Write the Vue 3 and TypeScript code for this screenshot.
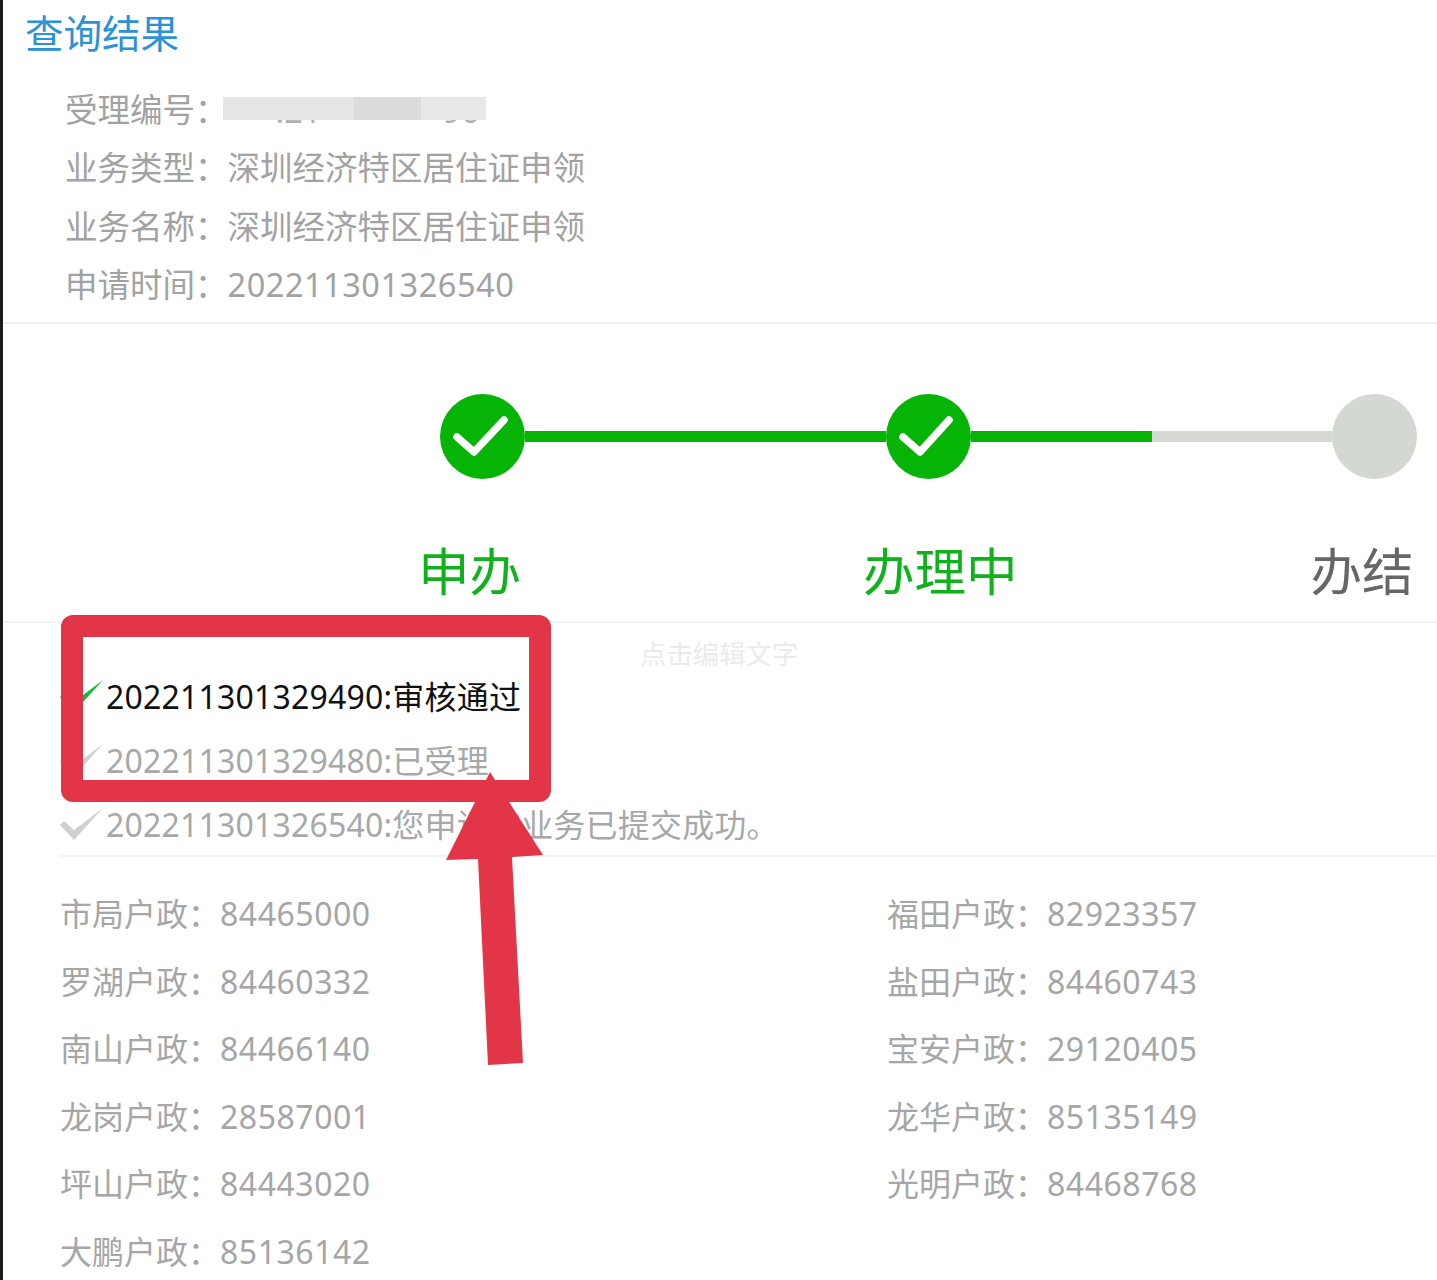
<script setup lang="ts">
const COLON = '\uFF1A'
const infoRows = [
  { label: '业务类型', value: '深圳经济特区居住证申领', digits: false },
  { label: '业务名称', value: '深圳经济特区居住证申领', digits: false },
  { label: '申请时间', value: '202211301326540', digits: true },
]
const logs = [
  { text: '202211301329490:审核通过', active: true },
  { text: '202211301329480:已受理', active: false },
  { text: '202211301326540:您申请的业务已提交成功。', active: false },
]
const contacts = [
  ['市局户政', '84465000'], ['福田户政', '82923357'],
  ['罗湖户政', '84460332'], ['盐田户政', '84460743'],
  ['南山户政', '84466140'], ['宝安户政', '29120405'],
  ['龙岗户政', '28587001'], ['龙华户政', '85135149'],
  ['坪山户政', '84443020'], ['光明户政', '84468768'],
  ['大鹏户政', '85136142'],
]
</script>

<template>
  <div class="page">
    <h1 class="title">查询结果</h1>

    <section class="info">
      <div class="info-row">
        <span>受理编号{{ COLON }}</span>
        <span class="masked">
          <span class="mask-digits mask-digits-a">.21</span>
          <span class="mask-digits mask-digits-b">96</span>
          <span class="mask mask-a"></span>
          <span class="mask mask-b"></span>
          <span class="mask mask-c"></span>
        </span>
      </div>
      <div v-for="r in infoRows" :key="r.label" class="info-row">
        <span>{{ r.label }}{{ COLON }}</span><span :class="{ digits: r.digits }">{{ r.value }}</span>
      </div>
    </section>

    <section class="steps">
      <div class="track">
        <span class="dot done">
          <svg viewBox="0 0 85 85" width="85" height="85"><path d="M17 43 L34 58 L64 26" fill="none" stroke="#fff" stroke-width="7.5" stroke-linecap="round" stroke-linejoin="round" /></svg>
        </span>
        <span class="seg seg-full"></span>
        <span class="dot done">
          <svg viewBox="0 0 85 85" width="85" height="85"><path d="M17 43 L34 58 L63 26" fill="none" stroke="#fff" stroke-width="7.5" stroke-linecap="round" stroke-linejoin="round" /></svg>
        </span>
        <span class="seg seg-half"></span>
        <span class="dot todo"></span>
      </div>
      <div class="step-labels">
        <span class="step-label green">申办</span>
        <span class="step-label green">办理中</span>
        <span class="step-label dark">办结</span>
      </div>
    </section>

    <section class="logs">
      <div class="hint">点击编辑文字</div>
      <div v-for="l in logs" :key="l.text" class="log" :class="{ active: l.active }">
        <svg class="tick" viewBox="0 0 46 36" width="46" height="36"><path d="M0 20 L4 16 L14 25 L43 3 L14 35 Z" :fill="l.active ? '#12b93a' : '#cfd1d1'" /></svg>
        <span>{{ l.text }}</span>
      </div>
    </section>

    <section class="contacts">
      <div v-for="c in contacts" :key="c[0]" class="contact">{{ c[0] }}{{ COLON }}<span class="digits">{{ c[1] }}</span></div>
    </section>

    <div class="red-box"></div>
    <svg class="arrow" viewBox="0 0 110 300" width="110" height="300">
      <path d="M46 0 L99 83 L68 85 L79 291 L44 293 L34 87 L2 88 Z" fill="#e23548" />
    </svg>
  </div>
</template>

<style scoped>
.page {
  position: relative;
  box-sizing: border-box;
  width: 1437px;
  height: 1280px;
  overflow: hidden;
  background: #fff;
  border-left: 3px solid #1c1a1b;
  font-family: "Noto Sans", "Noto Sans CJK SC", sans-serif;
  font-weight: 400;
}
.title {
  margin: 0;
  padding: 7px 0 0 22px;
  height: 74px;
  box-sizing: border-box;
  font-size: 38.5px;
  line-height: 52px;
  font-weight: 400;
  color: #2a92d8;
}
.info {
  height: 250px;
  box-sizing: border-box;
  padding: 7px 0 0 62px;
  border-bottom: 2px solid #f0f0f0;
}
.info-row {
  display: flex;
  height: 58.3px;
  line-height: 58.3px;
  font-size: 32.5px;
  color: #a2a2a2;
}
.digits {
  letter-spacing: 0.53px;
}
.masked {
  position: relative;
  display: block;
  width: 360px;
}
.mask-digits {
  position: absolute;
  top: 1px;
  white-space: nowrap;
  color: #b0b0b0;
}
.mask-digits-a { left: 48px; }
.mask-digits-b { left: 215px; }
.mask {
  position: absolute;
  top: 16px;
  height: 23px;
}
.mask-a { left: -5px; width: 131px; background: #e6e6e6; }
.mask-b { left: 126px; width: 67px; background: #dcdcdc; }
.mask-c { left: 193px; width: 65px; background: #e8e8e8; }
.steps {
  height: 299px;
  box-sizing: border-box;
  border-bottom: 2px solid #f2f2f2;
  padding: 70px 20px 0 437px;
}
.track {
  display: flex;
  align-items: center;
  height: 85px;
}
.dot {
  flex: none;
  width: 85px;
  height: 85px;
  border-radius: 50%;
  display: block;
}
.dot svg { display: block; }
.done { background: #06b406; }
.todo { background: #d3d8d3; }
.seg {
  flex: 1;
  height: 11px;
}
.seg-full { background: #06b406; }
.seg-half { background: linear-gradient(to right, #06b406 0 50%, #d5d8d3 50% 100%); }
.step-labels {
  display: flex;
  height: 90px;
  margin: 56px 0 0 -22px;
}
.step-label {
  font-size: 51.5px;
  line-height: 72px;
  white-space: nowrap;
}
.step-label:nth-child(2) { margin-left: 342px; }
.step-label:nth-child(3) { margin-left: 293px; }
.green { color: #0fb21a; }
.dark { color: #666; }
.logs {
  position: relative;
  height: 234px;
  box-sizing: border-box;
  margin-left: 57px;
  padding-top: 40px;
  border-bottom: 2px solid #f2f2f2;
}
.hint {
  position: absolute;
  left: 580px;
  top: 13px;
  font-size: 26.4px;
  line-height: 36px;
  color: #ebebeb;
}
.log {
  display: flex;
  align-items: center;
  height: 64px;
  font-size: 32px;
  letter-spacing: 0.2px;
  color: #a6a8a9;
  white-space: nowrap;
}
.log.active { color: #111; }
.tick {
  flex: none;
}
.contacts {
  display: grid;
  grid-template-columns: 827px 1fr;
  padding: 23px 0 0 57px;
  grid-auto-rows: 67.6px;
}
.contact {
  font-size: 32px;
  line-height: 67.6px;
  color: #a6a6a6;
  white-space: nowrap;
}
.red-box {
  position: absolute;
  left: 58px;
  top: 615px;
  width: 490px;
  height: 187px;
  box-sizing: border-box;
  border: 22px solid #e23548;
  border-radius: 12px;
}
.arrow {
  position: absolute;
  left: 441px;
  top: 772px;
}
</style>
